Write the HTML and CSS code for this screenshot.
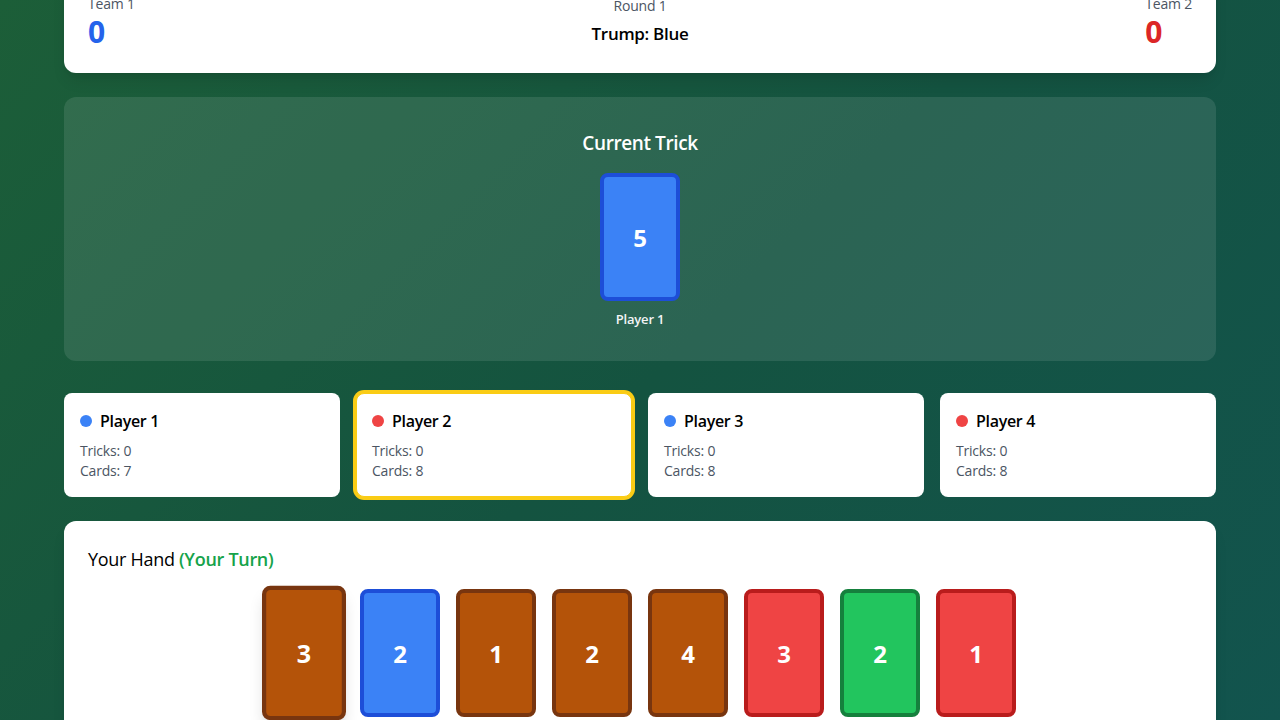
FILE: index.html
```html
<!DOCTYPE html>
<html>
<head>
<meta charset="utf-8">
<link rel="stylesheet" href="styles.css">
</head>
<body>
<div class="page">
  <header class="panel scoreboard">
    <div class="team">
      <div class="muted">Team 1</div>
      <div class="score blue">0</div>
    </div>
    <div class="center">
      <div class="muted">Round 1</div>
      <div class="trump">Trump: Blue</div>
    </div>
    <div class="team">
      <div class="muted">Team 2</div>
      <div class="score red">0</div>
    </div>
  </header>

  <section class="trick">
    <h2 class="trick-title">Current Trick</h2>
    <div class="trick-cards">
      <div class="played">
        <div class="card c-blue">5</div>
        <div class="played-name">Player 1</div>
      </div>
    </div>
  </section>

  <section class="players">
    <div class="player">
      <div class="pname"><span class="dot d-blue"></span>Player 1</div>
      <div class="stat">Tricks: 0</div>
      <div class="stat">Cards: 7</div>
    </div>
    <div class="player active">
      <div class="pname"><span class="dot d-red"></span>Player 2</div>
      <div class="stat">Tricks: 0</div>
      <div class="stat">Cards: 8</div>
    </div>
    <div class="player">
      <div class="pname"><span class="dot d-blue"></span>Player 3</div>
      <div class="stat">Tricks: 0</div>
      <div class="stat">Cards: 8</div>
    </div>
    <div class="player">
      <div class="pname"><span class="dot d-red"></span>Player 4</div>
      <div class="stat">Tricks: 0</div>
      <div class="stat">Cards: 8</div>
    </div>
  </section>

  <section class="panel hand">
    <h3 class="hand-title">Your Hand <span class="turn">(Your Turn)</span></h3>
    <div class="hand-cards">
      <div class="card c-orange lifted">3</div>
      <div class="card c-blue">2</div>
      <div class="card c-orange">1</div>
      <div class="card c-orange">2</div>
      <div class="card c-orange">4</div>
      <div class="card c-red">3</div>
      <div class="card c-green">2</div>
      <div class="card c-red">1</div>
    </div>
  </section>
</div>
</body>
</html>
```

FILE: styles.css
```css
* { box-sizing: border-box; }
html, body { margin: 0; padding: 0; }
body {
  font-family: "Open Sans", "Noto Sans", sans-serif;
  background: linear-gradient(135deg, #1c5e38 0%, #145340 50%, #12544f 100%);
  min-height: 100vh;
  color: #111827;
}
.page {
  max-width: 1152px;
  margin: -30px auto 0;
  display: flex;
  flex-direction: column;
}
.panel {
  background: #fff;
  border-radius: 12px;
  box-shadow: 0 10px 15px -3px rgba(0,0,0,0.1), 0 4px 6px -4px rgba(0,0,0,0.1);
}
.scoreboard {
  padding: 24px;
  height: 103px;
  display: flex;
  justify-content: space-between;
  align-items: center;
}
.team { display: flex; flex-direction: column; align-items: flex-start; align-self: flex-start; }
.muted { font-size: 14px; line-height: 20px; color: #4b5563; letter-spacing: -0.2px; }
.score { font-size: 30px; line-height: 36px; font-weight: 700; }
.blue { color: #2563eb; }
.red { color: #dc2626; }
.center { display: flex; flex-direction: column; align-items: center; }
.trump { font-size: 17px; line-height: 28px; font-weight: 600; margin-top: 4px; color: #000; letter-spacing: -0.3px; }

.trick {
  margin-top: 24px;
  background: rgba(255,255,255,0.1);
  border-radius: 12px;
  padding: 32px;
  display: flex;
  flex-direction: column;
  align-items: center;
}
.trick-title {
  margin: 0 0 16px;
  font-size: 19px;
  line-height: 28px;
  font-weight: 600;
  color: #fff;
  letter-spacing: -0.4px;
}
.trick-cards { display: flex; gap: 16px; justify-content: center; }
.played { display: flex; flex-direction: column; align-items: center; }
.played-name { margin-top: 8px; line-height: 20px; font-weight: 600; color: #f3f4f6; font-size: 13px; letter-spacing: -0.2px; }

.card {
  width: 80px;
  height: 128px;
  border-radius: 8px;
  border: 4px solid;
  display: flex;
  align-items: center;
  justify-content: center;
  color: #fff;
  font-size: 24px;
  font-weight: 700;
  flex: none;
}
.c-blue { background: #3b82f6; border-color: #1d4ed8; }
.c-orange { background: #b45309; border-color: #78350f; }
.c-red { background: #ef4444; border-color: #b91c1c; }
.c-green { background: #22c55e; border-color: #15803d; }

.players {
  margin-top: 32px;
  display: grid;
  grid-template-columns: repeat(4, 1fr);
  gap: 16px;
}
.player {
  background: #fff;
  border-radius: 8px;
  padding: 16px;
  height: 104px;
}
.player.active { box-shadow: 0 0 0 3px #facc15; border: 1px solid #facc15; padding: 15px; }
.pname {
  display: flex;
  align-items: center;
  gap: 8px;
  font-size: 16px;
  line-height: 24px;
  font-weight: 600;
  color: #000;
  margin-bottom: 8px;
  letter-spacing: -0.3px;
}
.dot { width: 12px; height: 12px; border-radius: 50%; display: inline-block; }
.d-blue { background: #3b82f6; }
.d-red { background: #ef4444; }
.stat { font-size: 14px; line-height: 20px; color: #4b5563; letter-spacing: -0.2px; }

.hand {
  margin-top: 24px;
  padding: 24px;
  min-height: 260px;
}
.hand-title {
  margin: 0 0 16px;
  font-size: 18px;
  line-height: 28px;
  font-weight: 500;
  color: #000;
  letter-spacing: -0.3px;
}
.turn { color: #16a34a; font-weight: 600; }
.hand-cards { display: flex; justify-content: center; gap: 16px; }
.lifted { transform: scale(1.05); box-shadow: 0 10px 15px -3px rgba(0,0,0,0.15), 0 4px 6px -4px rgba(0,0,0,0.1); }
```
